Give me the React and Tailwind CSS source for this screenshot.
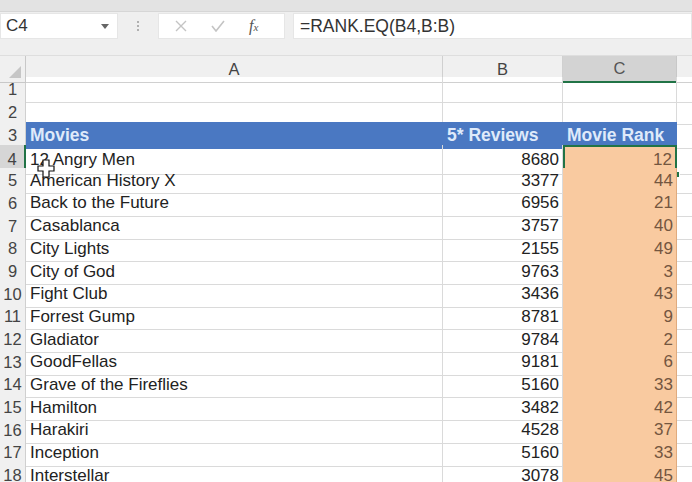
import React from "react";

const rows = [
  ["12 Angry Men", 8680, 12],
  ["American History X", 3377, 44],
  ["Back to the Future", 6956, 21],
  ["Casablanca", 3757, 40],
  ["City Lights", 2155, 49],
  ["City of God", 9763, 3],
  ["Fight Club", 3436, 43],
  ["Forrest Gump", 8781, 9],
  ["Gladiator", 9784, 2],
  ["GoodFellas", 9181, 6],
  ["Grave of the Fireflies", 5160, 33],
  ["Hamilton", 3482, 42],
  ["Harakiri", 4528, 37],
  ["Inception", 5160, 33],
  ["Interstellar", 3078, 45],
];

const cols = "grid grid-cols-[26px_417px_120px_114px_1fr]";

function RowHead({ n, active }) {
  return (
    <div
      className={
        "flex items-center justify-center border-b border-r text-[16.5px] text-[#444] " +
        (active
          ? "bg-[#d6d6d6] border-b-[#c8c8c8] border-r-2 border-r-[#217346]"
          : "bg-[#f0f0f0] border-[#d0d0d0]")
      }
    >
      {n}
    </div>
  );
}

function FatCross() {
  return (
    <svg
      className="absolute left-[37px] top-[159px]"
      width="18"
      height="19"
      viewBox="0 0 18 19"
    >
      <path
        d="M6 1h6v6h5v5h-5v6H6v-6H1V7h5z"
        fill="#fff"
        stroke="#111"
        strokeWidth="1.2"
      />
    </svg>
  );
}

export default function App() {
  return (
    <div
      className="relative w-[692px] h-[482px] overflow-hidden bg-white"
      style={{ fontFamily: '"Liberation Sans", Arial, sans-serif' }}
    >
      {/* ribbon edge */}
      <div className="h-[12px] bg-[#e3e3e3] border-b border-[#d6d6d6]" />

      {/* formula bar */}
      <div className="h-[43px] bg-[#efefef] flex items-start pt-[1px]">
        <div className="w-[118px] h-[26px] bg-white border border-[#e6e6e6] flex items-center justify-between pl-[5px] pr-[8px]">
          <span className="text-[17px] text-[#333]">C4</span>
          <svg width="8" height="5" viewBox="0 0 8 5">
            <path d="M0 0h8L4 5z" fill="#666" />
          </svg>
        </div>
        <div className="w-[40px] h-[26px] flex flex-col items-center justify-center gap-[2px]">
          <span className="w-[2px] h-[2px] bg-[#b0b0b0]" />
          <span className="w-[2px] h-[2px] bg-[#b0b0b0]" />
          <span className="w-[2px] h-[2px] bg-[#b0b0b0]" />
        </div>
        <div className="w-[127px] h-[26px] bg-white border border-[#e6e6e6] flex items-center">
          <svg className="ml-[16px]" width="12" height="12" viewBox="0 0 12 12">
            <path d="M1 1l10 10M11 1L1 11" stroke="#c4c4c4" strokeWidth="1.4" />
          </svg>
          <svg className="ml-[24px]" width="14" height="12" viewBox="0 0 14 12">
            <path d="M1 6l4 5L13 1" stroke="#c4c4c4" strokeWidth="1.6" fill="none" />
          </svg>
          <span
            className="ml-[24px] text-[16px] italic text-[#555]"
            style={{ fontFamily: '"Liberation Serif", serif' }}
          >
            f<span className="text-[11px]">x</span>
          </span>
        </div>
        <div className="ml-[8px] flex-1 h-[26px] bg-white border border-[#e6e6e6] flex items-center pl-[6px]">
          <span className="text-[17.5px] text-[#333]">=RANK.EQ(B4,B:B)</span>
        </div>
      </div>

      {/* column headers */}
      <div className={cols + " h-[22px] bg-[#f0f0f0] border-t border-[#dedede]"}>
        <div className="relative border-r border-b border-[#c8c8c8]">
          <svg className="absolute right-[4px] bottom-[4px]" width="12" height="12" viewBox="0 0 12 12">
            <path d="M12 0v12H0z" fill="#c6c6c6" />
          </svg>
        </div>
        <div className="flex items-center justify-center border-r border-b border-[#d0d0d0] text-[16.5px] text-[#444]">A</div>
        <div className="flex items-center justify-center border-r border-b border-[#d0d0d0] text-[16.5px] text-[#444]">B</div>
        <div className="flex items-center justify-center bg-[#d3d3d3] border-r border-r-[#c8c8c8] border-b-2 border-b-[#217346] text-[16.5px] text-[#555]">C</div>
        <div className="border-b border-[#d0d0d0]" />
      </div>

      {/* rows 1-2 */}
      {[1, 2].map((n) => (
        <div key={n} className={cols + " h-[22.7px]"}>
          <RowHead n={n} />
          <div className="border-r border-b border-[#dadada]" />
          <div className="border-r border-b border-[#dadada]" />
          <div className="border-r border-b border-[#dadada]" />
          <div className="border-b border-[#dadada]" />
        </div>
      ))}

      {/* row 3 table header */}
      <div className={cols + " h-[22.7px]"}>
        <RowHead n={3} />
        <div className="bg-[#4a78c2] flex items-center pl-[4px] text-[17.5px] font-bold text-[#dfeafa]">Movies</div>
        <div className="bg-[#4a78c2] flex items-center pl-[4px] text-[17.5px] font-bold text-[#dfeafa]">5* Reviews</div>
        <div className="bg-[#4a78c2] flex items-center pl-[4px] text-[17.5px] font-bold text-[#dfeafa]">Movie Rank</div>
        <div className="border-b border-[#dadada]" />
      </div>

      {/* data rows */}
      {rows.map(([name, reviews, rank], i) => {
        const n = i + 4;
        const active = n === 4;
        return (
          <div key={n} className={cols + " h-[22.7px]"}>
            <RowHead n={n} active={active} />
            <div className="flex items-center pl-[4px] border-r border-b border-[#dadada] text-[17px] text-[#222]">
              {name}
            </div>
            <div className="flex items-center justify-end pr-[3px] border-r border-b border-[#dadada] text-[17px] text-[#222]">
              {reviews}
            </div>
            <div
              className={
                "relative flex items-center justify-end pr-[3px] bg-[#f9caa0] text-[17px] text-[#74563f] " +
                (active
                  ? "border-2 border-[#217346]"
                  : "border-r border-b border-[#e0ab7e]")
              }
            >
              {rank}
              {active && (
                <span className="absolute right-[-5px] bottom-[-5px] w-[7px] h-[7px] bg-[#217346] border border-white" />
              )}
            </div>
            <div className="border-b border-[#dadada]" />
          </div>
        );
      })}

      <FatCross />
    </div>
  );
}
